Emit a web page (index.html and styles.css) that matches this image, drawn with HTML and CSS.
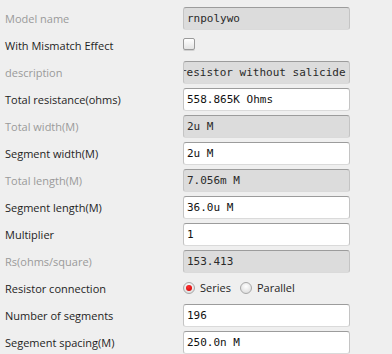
FILE: index.html
```html
<!DOCTYPE html>
<html>
<head>
<meta charset="utf-8">
<link rel="stylesheet" href="styles.css">
</head>
<body>
<div class="form">
  <div class="label dis">Model name</div>
  <div class="field ro">rnpolywo</div>

  <div class="label">With Mismatch Effect</div>
  <div class="cell"><span class="check"></span></div>

  <div class="label dis">description</div>
  <div class="field ro clip"><span class="shift">resistor without salicide</span></div>

  <div class="label">Total resistance(ohms)</div>
  <div class="field">558.865K Ohms</div>

  <div class="label dis">Total width(M)</div>
  <div class="field ro">2u M</div>

  <div class="label">Segment width(M)</div>
  <div class="field">2u M</div>

  <div class="label dis">Total length(M)</div>
  <div class="field ro">7.056m M</div>

  <div class="label">Segment length(M)</div>
  <div class="field">36.0u M</div>

  <div class="label">Multiplier</div>
  <div class="field">1</div>

  <div class="label dis">Rs(ohms/square)</div>
  <div class="field ro">153.413</div>

  <div class="label">Resistor connection</div>
  <div class="cell radios">
    <span class="radio on"></span><span class="rlabel">Series</span>
    <span class="radio"></span><span class="rlabel">Parallel</span>
  </div>

  <div class="label">Number of segments</div>
  <div class="field">196</div>

  <div class="label">Segement spacing(M)</div>
  <div class="field">250.0n M</div>
</div>
</body>
</html>
```
FILE: styles.css
```css
html, body {
  margin: 0;
  padding: 0;
  background: #efefef;
}
body {
  width: 392px;
  height: 354px;
  overflow: hidden;
}
.form {
  display: grid;
  grid-template-columns: 178px 167px;
  grid-auto-rows: 23px;
  row-gap: 4px;
  padding: 7px 0 0 5px;
  font-family: "Open Sans", "Noto Sans", sans-serif;
  font-size: 11px;
  color: #1e1e1e;
}
.label {
  display: flex;
  align-items: center;
  white-space: nowrap;
}
.label.dis {
  color: #9a9a9a;
}
.field {
  box-sizing: border-box;
  height: 23px;
  border: 1px solid;
  border-color: #9c9c9c #c4c4c4 #dadada #c4c4c4;
  border-radius: 3px;
  background: #ffffff;
  padding: 0 3px;
  display: flex;
  align-items: center;
  font-family: "DejaVu Sans Mono", monospace;
  font-size: 11px;
  color: #111;
  white-space: nowrap;
  overflow: hidden;
}
.field.ro {
  background: #dcdcdc;
  color: #2a2a2a;
}
.field.clip {
  padding-left: 0;
}
.shift {
  margin-left: -4px;
}
.cell {
  display: flex;
  align-items: center;
}
.check {
  box-sizing: border-box;
  width: 12px;
  height: 12px;
  margin-top: -3px;
  border: 1px solid #9a9a9a;
  border-radius: 2px;
  background: linear-gradient(#ffffff, #e4e4e4);
  box-shadow: 0 1px 0 #d0d0d0;
}
.radios {
  font-family: "Open Sans", "Noto Sans", sans-serif;
  font-size: 11px;
  color: #1e1e1e;
  margin-top: -2px;
}
.radio {
  box-sizing: border-box;
  width: 12px;
  height: 12px;
  border-radius: 50%;
  border: 1px solid #a8a8a8;
  background: radial-gradient(circle at 50% 35%, #ffffff, #d6d6d6);
  display: inline-flex;
  align-items: center;
  justify-content: center;
  margin-right: 5px;
}
.radio.on::after {
  content: "";
  width: 6px;
  height: 6px;
  border-radius: 50%;
  background: radial-gradient(circle at 40% 35%, #ff3030, #c80000);
}
.rlabel {
  margin-right: 9px;
}
```
